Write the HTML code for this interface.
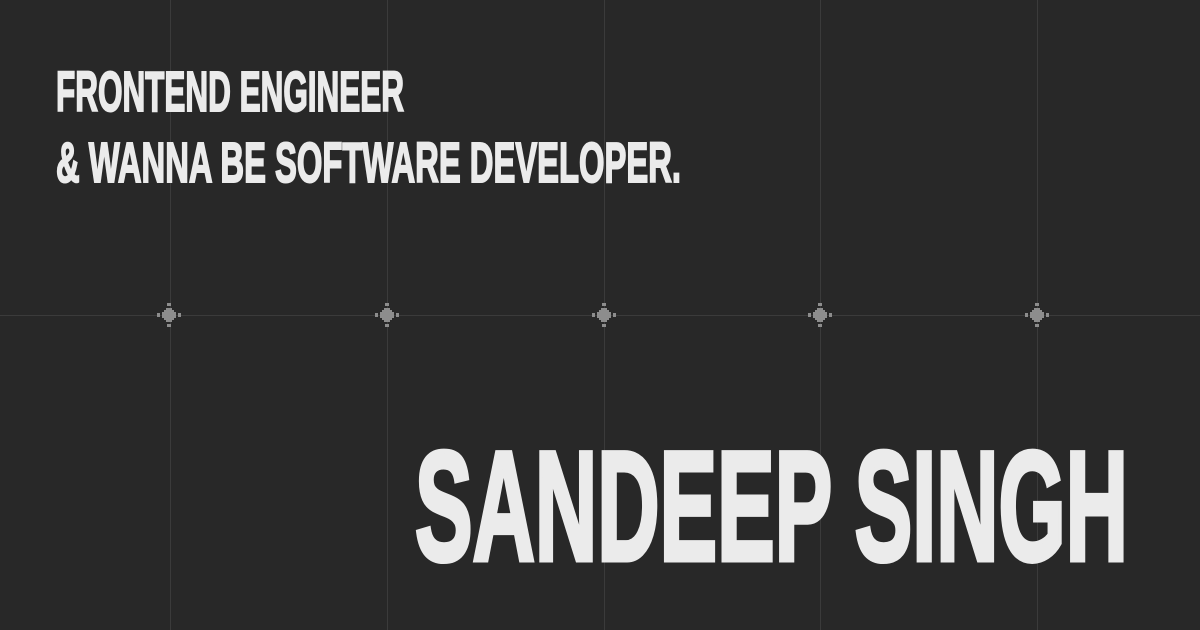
<!DOCTYPE html>
<html><head><meta charset="utf-8"><style>
html,body{margin:0;padding:0;background:#282828;}
svg{display:block}
</style></head><body>
<svg width="1200" height="630" viewBox="0 0 1200 630" xmlns="http://www.w3.org/2000/svg">
<rect width="1200" height="630" fill="#282828"/>
<g stroke="#3b3b3b" stroke-width="1">
<line x1="170.5" y1="0" x2="170.5" y2="630"/>
<line x1="387.5" y1="0" x2="387.5" y2="630"/>
<line x1="604.5" y1="0" x2="604.5" y2="630"/>
<line x1="820.5" y1="0" x2="820.5" y2="630"/>
<line x1="1037.5" y1="0" x2="1037.5" y2="630"/>
<line x1="0" y1="315.5" x2="1200" y2="315.5"/>
</g>
<defs>
<g id="c" fill="#8d8d8d">
<rect x="-3" y="-7" width="6" height="14"/>
<rect x="-7" y="-3" width="14" height="6"/>
<rect x="-5" y="-5" width="10" height="10"/>
<rect x="-2" y="-12" width="4" height="3"/>
<rect x="-2" y="9" width="4" height="3"/>
<rect x="-12" y="-2" width="3" height="4"/>
<rect x="9" y="-2" width="3" height="4"/>
</g>
</defs>
<use href="#c" x="169" y="315"/>
<use href="#c" x="387" y="315"/>
<use href="#c" x="604" y="315"/>
<use href="#c" x="820" y="315"/>
<use href="#c" x="1037" y="315"/>
<g fill="#ebebeb" stroke="#ebebeb" stroke-linejoin="miter" font-family="'Liberation Sans Narrow','Liberation Sans',sans-serif" font-weight="bold">
<text x="56" y="111" font-size="57" stroke-width="2" textLength="348" lengthAdjust="spacingAndGlyphs">FRONTEND ENGINEER</text>
<text x="56" y="182" font-size="57" stroke-width="2" textLength="625" lengthAdjust="spacingAndGlyphs">&amp; WANNA BE SOFTWARE DEVELOPER.</text>
<text x="415" y="560" font-size="156" stroke-width="5" textLength="713" lengthAdjust="spacingAndGlyphs">SANDEEP SINGH</text>
</g>
</svg>
</body></html>
